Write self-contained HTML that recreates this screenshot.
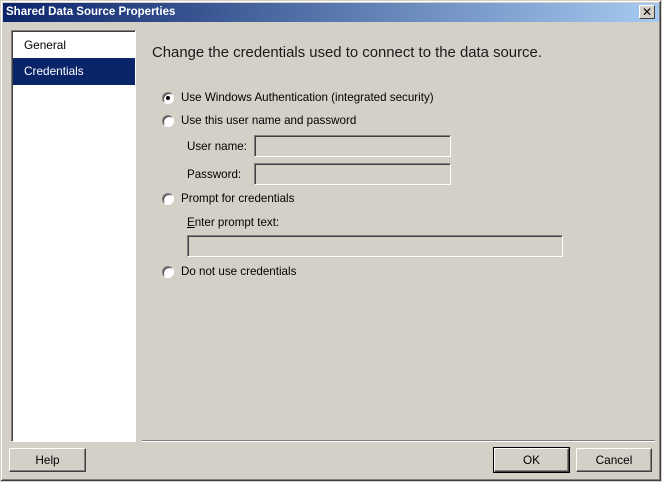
<!DOCTYPE html>
<html><head><meta charset="utf-8"><style>
*{margin:0;padding:0;box-sizing:border-box}
body{width:662px;height:482px;background:#d4d0c8;font-family:"Liberation Sans","DejaVu Sans",sans-serif;font-size:11.6px;color:#000;position:relative;overflow:hidden}
.win{position:absolute;left:0;top:0;width:662px;height:482px;border:1px solid #d4d0c8;box-shadow:inset -1px -1px 0 #404040,inset 1px 1px 0 #fff,inset -2px -2px 0 #808080}
.title{position:absolute;left:3px;top:3px;width:656px;height:19px;background:linear-gradient(to right,#0a246a,#a6caf0);color:#fff;font-weight:bold;font-size:11.5px;line-height:19px;padding-left:3px}
.x{position:absolute;right:4px;top:2px;width:16px;height:14px;background:#d4d0c8;border:1px solid;border-color:#fff #404040 #404040 #fff;color:#000;font-size:12px;line-height:12px;text-align:center;font-weight:bold}
.a{position:absolute;white-space:nowrap}
.list{position:absolute;left:11px;top:30px;width:125px;height:412px;background:#fff;border:1px solid;border-color:#808080 #fff #fff #808080;box-shadow:inset 1px 1px 0 #404040}
.item{position:absolute;left:1px;width:122px;height:27px;line-height:27px;padding-left:11px;font-size:11.8px}
.sel{background:#0a246a;color:#fff}
.radio{position:absolute;width:12px;height:12px;border-radius:50%;background:#fff;border:1px solid;border-color:#808080 #fff #fff #808080;box-shadow:inset 1px 1px 0 #404040}
.radio.on::after{content:"";position:absolute;left:3px;top:3px;width:4px;height:4px;border-radius:50%;background:#000}
.tb{position:absolute;height:22px;border:1px solid;border-color:#808080 #fff #fff #808080;box-shadow:inset 1px 1px 0 #404040;background:#d4d0c8}
.btn{position:absolute;top:448px;height:24px;border:1px solid;border-color:#fff #404040 #404040 #fff;box-shadow:inset -1px -1px 0 #808080;text-align:center;line-height:22px;font-size:11.8px}
</style></head><body>
<div class="win"></div>
<div class="title">Shared Data Source Properties<div class="x">✕</div></div>
<div class="list">
<div class="item" style="top:1px">General</div>
<div class="item sel" style="top:27px">Credentials</div>
</div>
<div class="a" style="left:152px;top:45px;font-size:14.9px;color:#1a1a1a">Change the credentials used to connect to the data source.</div>
<div class="radio on" style="left:162px;top:92px"></div>
<div class="a" style="left:181px;top:91px">Use Windows Authentication (integrated security)</div>
<div class="radio" style="left:162px;top:115px"></div>
<div class="a" style="left:181px;top:114px">Use this user name and password</div>
<div class="a" style="left:187px;top:140px">User name:</div>
<div class="tb" style="left:254px;top:135px;width:197px"></div>
<div class="a" style="left:187px;top:168px">Password:</div>
<div class="tb" style="left:254px;top:163px;width:197px"></div>
<div class="radio" style="left:162px;top:193px"></div>
<div class="a" style="left:181px;top:192px">Prompt for credentials</div>
<div class="a" style="left:187px;top:216px"><u>E</u>nter prompt text:</div>
<div class="tb" style="left:187px;top:235px;width:376px"></div>
<div class="radio" style="left:162px;top:266px"></div>
<div class="a" style="left:181px;top:265px">Do not use credentials</div>
<div style="position:absolute;left:142px;top:440px;width:513px;height:2px;border-top:1px solid #808080;border-bottom:1px solid #fff"></div>
<div class="btn" style="left:9px;width:77px">Help</div>
<div class="btn" style="left:494px;width:75px;outline:1px solid #000">OK</div>
<div class="btn" style="left:576px;width:76px">Cancel</div>
</body></html>
